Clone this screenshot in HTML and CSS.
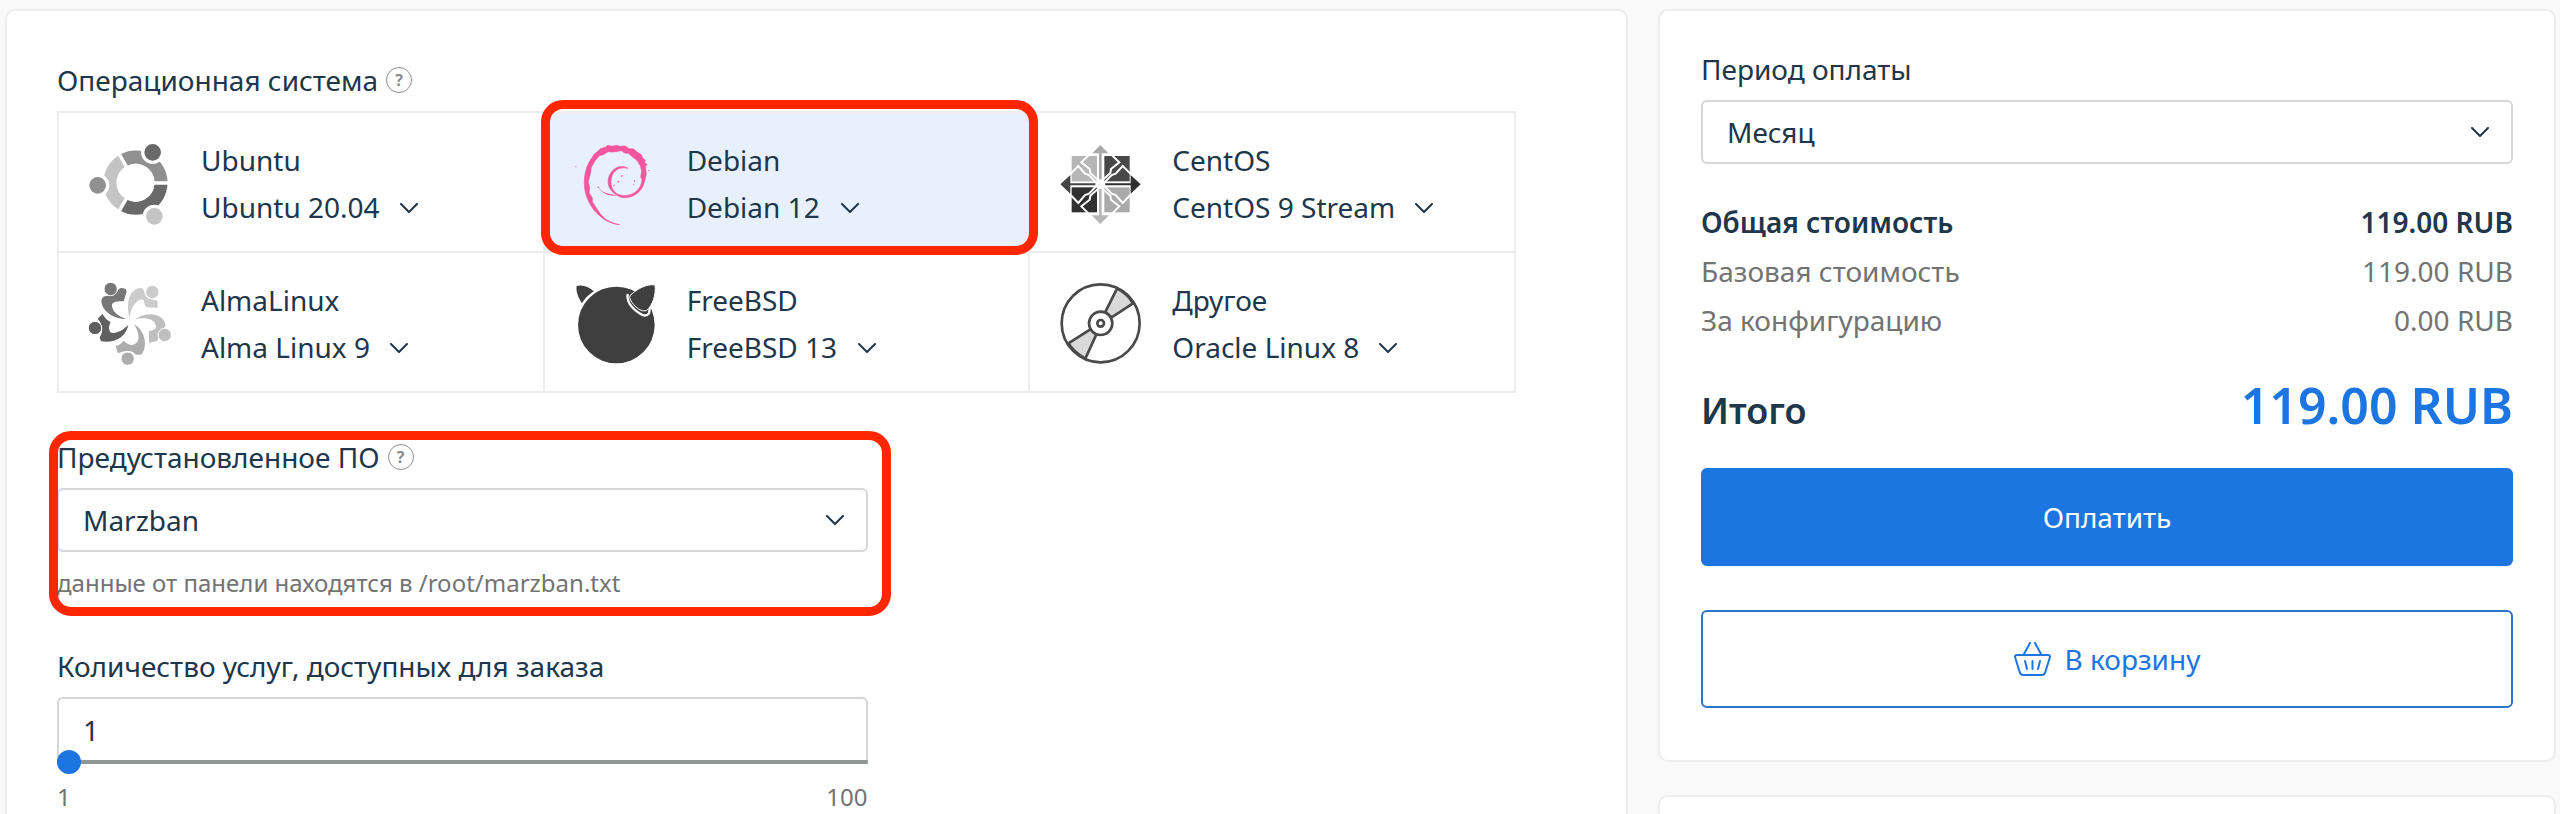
FILE: index.html
```html
<!DOCTYPE html>
<html lang="ru">
<head>
<meta charset="utf-8">
<title>Заказ сервера</title>
<link rel="stylesheet" href="styles.css">
</head>
<body>
<svg class="sprite" aria-hidden="true">
  <symbol id="chevron" viewBox="0 0 18 10"><path d="M1 1l8 8 8-8" fill="none" stroke="currentColor" stroke-width="2" stroke-linecap="round" stroke-linejoin="round"/></symbol>
</svg>
<div class="page">
  <main class="card config">
    <section class="field os">
      <div class="label">Операционная система <button class="help" type="button" aria-label="Справка">?</button></div>
      <div class="os-grid">
        <div class="os-item">
          <svg class="logo" viewBox="29 36 246 246" aria-hidden="true">
            <g fill="none" stroke-width="39">
              <path d="M131 88.500A76 76 0 0 0 131 221.500" stroke="#c4c4c4"/>
              <path d="M131 88.500A76 76 0 0 1 245 155" stroke="#909090"/>
              <path d="M245 155A76 76 0 0 1 131 221.500" stroke="#696969"/>
            </g>
            <path d="M169 156h100M169 155L117 65M169 155l-52 90" stroke="#fff" stroke-width="10"/>
            <circle cx="169" cy="155" r="56" fill="#fff"/>
            <g stroke="#fff" stroke-width="10">
              <circle cx="55" cy="163" r="30" fill="#909090"/>
              <circle cx="220" cy="64" r="30" fill="#696969"/>
              <circle cx="225" cy="256" r="30" fill="#c4c4c4"/>
            </g>
          </svg>
          <div class="os-text">
            <label for="os-ubuntu">Ubuntu</label>
            <div class="version"><select id="os-ubuntu"><option>Ubuntu 20.04</option></select><svg class="chevron"><use href="#chevron"/></svg></div>
          </div>
        </div>
        <div class="os-item selected">
          <svg class="logo" viewBox="29 36 246 246" aria-hidden="true">
            <g fill="#f4559f">
              <path stroke="#f4559f" stroke-width="2" d="M163 281C110 278 59 222 57 160C56 130 64 101 80 80L86 70L98 61L105 53L120 49L127 43L140 46L155 43L163 46L180 45L191 53L205 54L215 63L228 71L232 81L240 88L238 94L246 102L240 103L243 130L237 153C231 181 206 200 178 200C164 200 158 195 151 190C124 174 122 141 140 121C152 106 173 102 188 112C166 107 149 115 141 132C130 158 140 191 174 194C210 194 229 170 230 146L226 138L229 120L225 104L215 88L199 76L190 67L178 66L168 59L143 63L128 62L114 71L102 74L88 91L78 109L75 130L69 151L73 170L71 185L81 201L81 212L93 231L106 250L120 264C134 273 149 279 163 281Z"/>
              <path d="M98 168Q109 182 122 186T157 193Q132 198 116 186T98 168Z"/>
              <path d="M97 167l4 0 0 4-4 0zM30 106l3 0 0 3-3 0zM168 132l4 0-1 5-3 0zM158 149l4 2-4 5-2-3zM144 162l4-2-1 5-3 0zM207 146l3 3-1 5-3-4zM204 158l3 4-3 1zM249 117l4 0-1 3-3 0z"/>
            </g>
          </svg>
          <div class="os-text">
            <label for="os-debian">Debian</label>
            <div class="version"><select id="os-debian"><option>Debian 12</option></select><svg class="chevron"><use href="#chevron"/></svg></div>
          </div>
          <span class="marker"></span>
        </div>
        <div class="os-item">
          <svg class="logo" viewBox="29 36 246 246" aria-hidden="true">
            <path d="M64 75h76v76H64z" fill="#b6b6b6"/>
            <path d="M162 75h76v76h-76z" fill="#484848"/>
            <path d="M64 169h76v75H64z" fill="#303030"/>
            <path d="M162 169h76v75h-76z" fill="#aaa"/>
            <path d="M150 42l24 25h-20v80h-8V67h-20z" fill="#a9a9a9"/>
            <path d="M150 279l-26-26h22v-80h8v80h22z" fill="#b6b6b6"/>
            <path d="M30 160l30-28v25h80v6H60v25z" fill="#454545"/>
            <path d="M271 160l-30 28v-25h-80v-6h80v-25z" fill="#303030"/>
            <g fill="none" stroke="#fff" stroke-width="6">
              <path d="M150 153L120 126 118 114 93 94 115 73M150 153L180 126 182 114 207 94 185 73"/>
              <path d="M150 167L120 194 118 206 93 226 115 248M150 167L180 194 182 206 207 226 185 248"/>
              <path d="M143 160L116 132 104 128 84 105 61 128M143 160L116 188 104 192 84 216 61 192"/>
              <path d="M157 160L184 132 196 128 217 105 240 128M157 160L184 188 196 192 217 216 240 192"/>
            </g>
            <circle cx="150" cy="160" r="15" fill="#fff"/>
          </svg>
          <div class="os-text">
            <label for="os-centos">CentOS</label>
            <div class="version"><select id="os-centos"><option>CentOS 9 Stream</option></select><svg class="chevron"><use href="#chevron"/></svg></div>
          </div>
        </div>
        <div class="os-item">
          <svg class="logo" viewBox="28 459 246 246" aria-hidden="true">
            <path fill="#777" d="M140 567C95 567 60 535 66 507C72 495 85 500 103 493C113 488 116 473 126 474Q144 475 140 488L132 514Q102 511 97 523C95 545 118 560 140 567Z"/>
            <path fill="#ccc" d="M150 564C140 530 143 482 178 475Q190 472 193 482Q196 504 214 508L234 512V534L200 532Q192 520 192 510Q184 506 175 512C155 530 152 545 150 564Z"/>
            <path fill="#bfbfbf" d="M165 568C200 543 250 548 257 583Q258 592 250 595Q235 602 237 615L233 633 208 638V603Q230 602 229 588C225 565 195 560 165 568Z"/>
            <path fill="#adadad" d="M163 583C196 600 206 650 185 674H168Q163 663 144 662 131 662 115 670L108 648Q120 646 132 632 145 645 158 645C186 640 178 605 163 583Z"/>
            <path fill="#606060" d="M146 585C138 620 110 640 64 634L60 622Q70 606 67 590 64 576 54 566L68 552 80 568 93 577Q84 590 91 606C105 615 128 602 146 585Z"/>
            <g stroke="#fff" stroke-width="3">
              <circle cx="93" cy="477" r="20" fill="#777"/>
              <circle cx="218" cy="486" r="20" fill="#ccc"/>
              <circle cx="255" cy="615" r="20" fill="#bfbfbf"/>
              <circle cx="144" cy="686" r="20" fill="#adadad"/>
              <circle cx="46" cy="594" r="20" fill="#606060"/>
            </g>
          </svg>
          <div class="os-text">
            <label for="os-alma">AlmaLinux</label>
            <div class="version"><select id="os-alma"><option>Alma Linux 9</option></select><svg class="chevron"><use href="#chevron"/></svg></div>
          </div>
        </div>
        <div class="os-item">
          <svg class="logo" viewBox="29 459 246 246" aria-hidden="true">
            <g fill="#3f3f3f">
              <circle cx="153" cy="585" r="115"/>
              <path d="M32 466Q60 458 90 484 64 500 50 524 26 490 32 466Z" stroke="#fff" stroke-width="5"/>
              <path d="M187 492Q182 525 226 552 242 562 251 550L254 530" stroke="#fff" stroke-width="7"/>
              <path d="M269 465C273 492 262 528 243 542C222 548 198 520 193 503Q192 494 202 490C215 478 245 460 269 465Z" stroke="#fff" stroke-width="3"/>
            </g>
          </svg>
          <div class="os-text">
            <label for="os-freebsd">FreeBSD</label>
            <div class="version"><select id="os-freebsd"><option>FreeBSD 13</option></select><svg class="chevron"><use href="#chevron"/></svg></div>
          </div>
        </div>
        <div class="os-item">
          <svg class="logo" viewBox="29 459 246 246" aria-hidden="true">
            <g fill="none" stroke="#4a4a4a" stroke-width="8">
              <path d="M200 476L165 546 184 562 248 520Q230 490 200 476ZM54 640L120 598 138 614 105 686Q72 668 54 640Z" fill="#d9d9d9"/>
              <circle cx="151" cy="580" r="117"/>
              <circle cx="151" cy="580" r="35" fill="#fff"/>
              <circle cx="151" cy="580" r="10"/>
            </g>
          </svg>
          <div class="os-text">
            <label for="os-other">Другое</label>
            <div class="version"><select id="os-other"><option>Oracle Linux 8</option></select><svg class="chevron"><use href="#chevron"/></svg></div>
          </div>
        </div>
      </div>
    </section>
    <div class="narrow">
      <section class="field software">
        <div class="label"><label for="software">Предустановленное ПО</label> <button class="help" type="button" aria-label="Справка">?</button></div>
        <div class="select"><select id="software"><option>Marzban</option></select><svg class="chevron"><use href="#chevron"/></svg></div>
        <p class="hint">данные от панели находятся в /root/marzban.txt</p>
        <span class="marker"></span>
      </section>
      <section class="field">
        <label class="label" for="count">Количество услуг, доступных для заказа</label>
        <div class="counter">
          <input class="count" id="count" type="text" value="1">
          <input class="range" type="range" min="1" max="100" value="1" aria-label="Количество услуг">
        </div>
        <div class="limits"><span>1</span><span>100</span></div>
      </section>
    </div>
  </main>
  <aside class="side">
    <section class="card summary">
      <div class="field">
        <label class="label" for="period">Период оплаты</label>
        <div class="select"><select id="period"><option>Месяц</option></select><svg class="chevron"><use href="#chevron"/></svg></div>
      </div>
      <dl class="costs">
        <div class="cost strong"><dt>Общая стоимость</dt><dd>119.00 RUB</dd></div>
        <div class="cost"><dt>Базовая стоимость</dt><dd>119.00 RUB</dd></div>
        <div class="cost"><dt>За конфигурацию</dt><dd>0.00 RUB</dd></div>
        <div class="total"><dt>Итого</dt><dd>119.00 RUB</dd></div>
      </dl>
      <div class="actions">
        <button class="btn primary" type="button">Оплатить</button>
        <button class="btn" type="button">
          <svg class="basket" viewBox="0 0 37 34" aria-hidden="true"><path d="M3 13h31q2 0 2 2l-5 16q-1 2-3 2H9q-2 0-3-2L1 15q0-2 2-2zM10 12l6-11M27 12L21 1M11 19l2 8M18.500 19v8M26 19l-2 8" fill="none" stroke="currentColor" stroke-width="2" stroke-linecap="round" stroke-linejoin="round"/></svg>
          В корзину
        </button>
      </div>
    </section>
    <section class="card next"></section>
  </aside>
</div>
</body>
</html>
```
FILE: styles.css
```css
* { box-sizing: border-box; }

body {
  margin: 0;
  background: #f9f9f9;
  color: #20364a;
  font: 28px/34px "Noto Sans", sans-serif;
}

.sprite { position: absolute; width: 0; height: 0; }

.page {
  display: grid;
  grid-template-columns: 1623fr 898fr;
  gap: 30px;
  min-height: 100vh;
  padding: 9px 4px 0 5px;
}

.card {
  background: #fff;
  border: 2px solid #ededed;
  border-radius: 10px;
}

.config {
  padding: 52px 110px 0 50px;
  border-bottom: 0;
  border-radius: 10px 10px 0 0;
}

select, input, button { font: inherit; color: inherit; margin: 0; }
select { appearance: none; background: none; border: 0; padding: 0; }

.field { display: flex; flex-direction: column; }

.label {
  display: flex;
  align-items: center;
  gap: 8px;
  margin-bottom: 14px;
}

.help {
  width: 26px;
  height: 26px;
  padding: 0;
  border: 1px solid #8f8f8f;
  border-radius: 50%;
  background: none;
  color: #8a8a8a;
  font-size: 16px;
  font-weight: 700;
  line-height: 24px;
}

.chevron { width: 18px; height: 10px; pointer-events: none; }

.os-grid {
  display: grid;
  grid-template-columns: repeat(3, 1fr);
  border: solid #ededed;
  border-width: 2px 0 0 2px;
}

.os-item {
  position: relative;
  display: flex;
  align-items: center;
  gap: 30px;
  padding: 24px 30px 20px;
  border: solid #ededed;
  border-width: 0 2px 2px 0;
}

.selected { background: #e8f0fe; }
.logo { width: 82px; height: 82px; flex: none; }
.os-text { display: flex; flex-direction: column; line-height: 47px; }
.version { display: flex; align-items: center; gap: 20px; }
.version select { height: 47px; }

.marker {
  position: absolute;
  z-index: 1;
  inset: -13px -10px -4px -4px;
  border: 9px solid #ff2600;
  border-radius: 22px;
  pointer-events: none;
}

.narrow { width: calc(100% * 5 / 9); margin-top: 47px; }
.software { position: relative; margin-bottom: 49px; }
.software .marker { inset: -9px -23px -16px -8px; }

.select { position: relative; display: grid; }

.select select {
  height: 64px;
  padding: 0 24px;
  border: 2px solid #d6d6d6;
  border-radius: 6px;
}

.select .chevron { position: absolute; right: 24px; top: 27px; }

.hint { margin: 14px 0 0; color: #737373; font-size: 24px; line-height: 34px; }

.counter { position: relative; display: grid; }

.count {
  width: 100%;
  height: 65px;
  padding: 0 24px;
  border: 2px solid #d6d6d6;
  border-radius: 6px 6px 0 0;
  background: #fff;
}

.range {
  position: absolute;
  left: 0;
  bottom: -12px;
  width: 100%;
  height: 24px;
  appearance: none;
  background: linear-gradient(#929696, #929696) center / 100% 4px no-repeat;
}

.range::-webkit-slider-thumb {
  appearance: none;
  width: 24px;
  height: 24px;
  border-radius: 50%;
  background: #1d75e1;
}

.limits {
  display: flex;
  justify-content: space-between;
  margin-top: 19px;
  color: #737373;
  font-size: 24px;
  line-height: 32px;
}

.side { display: flex; flex-direction: column; gap: 33px; }
.summary { padding: 41px 41px 52px; }

.costs { margin: 34px 0 0; line-height: 49px; }
.costs dd { margin: 0; }

.cost { display: flex; justify-content: space-between; color: #737373; }
.strong { color: #20364a; font-weight: 600; }

.total {
  display: flex;
  justify-content: space-between;
  align-items: baseline;
  margin-top: 30px;
  font-size: 36px;
  font-weight: 600;
  line-height: 60px;
}

.total dd { color: #1d75e1; font-size: 50px; }

.actions { display: grid; gap: 44px; margin-top: 27px; }

.btn {
  display: flex;
  align-items: center;
  justify-content: center;
  gap: 14px;
  height: 98px;
  border: 2px solid #2b73cf;
  border-radius: 6px;
  background: #fff;
  color: #1d75e1;
}

.primary { background: #1d75e1; border-color: #1d75e1; color: #fff; }
.basket { width: 37px; height: 34px; }

.next { flex: 1; min-height: 18px; border-bottom: 0; border-radius: 10px 10px 0 0; }
```
